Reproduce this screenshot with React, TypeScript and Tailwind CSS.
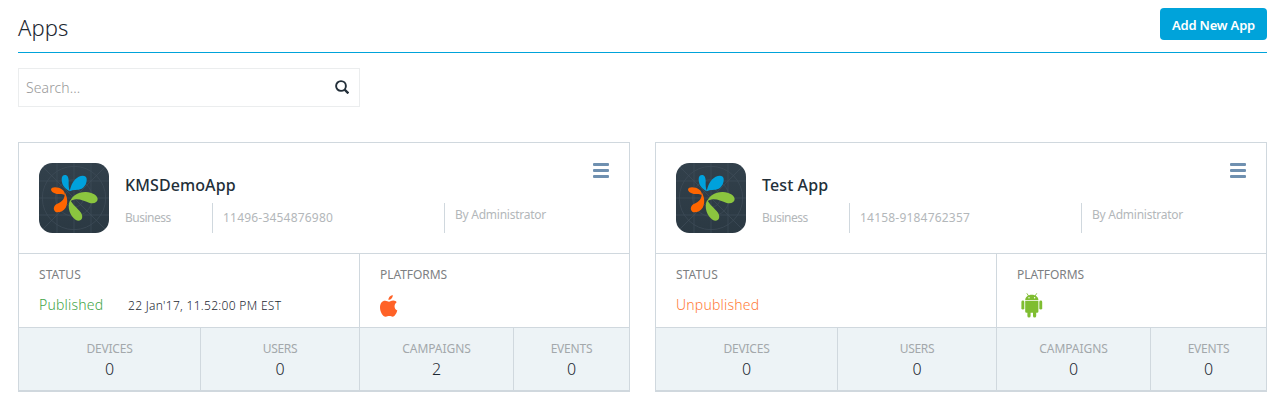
import React from 'react';

type AppInfo = {
  name: string;
  nameClass: string;
  id: string;
  published: boolean;
  date?: string;
  platform: 'apple' | 'android';
  campaigns: number;
};

const apps: AppInfo[] = [
  {
    name: 'KMSDemoApp', nameClass: 'tracking-[0.1px]', id: '11496-3454876980',
    published: true, date: "22 Jan'17, 11.52:00 PM EST", platform: 'apple', campaigns: 2,
  },
  {
    name: 'Test App', nameClass: 'tracking-[0.1px]', id: '14158-9184762357',
    published: false, platform: 'android', campaigns: 0,
  },
];

function AppLogo() {
  return (
    <svg className="h-[70px] w-[70px] shrink-0" viewBox="27 24 210 210">
      <defs>
        <linearGradient id="tile" x1="0" y1="0" x2="0" y2="1">
          <stop offset="0" stopColor="#32404b" />
          <stop offset="1" stopColor="#2b3943" />
        </linearGradient>
        <clipPath id="tileClip"><rect x="27" y="24" width="210" height="210" rx="40" /></clipPath>
      </defs>
      <rect x="27" y="24" width="210" height="210" rx="40" fill="url(#tile)" />
      <g clipPath="url(#tileClip)" fill="none" stroke="#414f5a" strokeWidth="2">
        <circle cx="132" cy="129" r="95" />
        <circle cx="132" cy="129" r="55" />
        <circle cx="132" cy="129" r="28" />
        <path d="M27 129H237M132 24V234M27 24L237 234M237 24L27 234M81 24V234M183 24V234M27 78H237M27 180H237" />
      </g>
      <path fill="#00a1dc" d="M120 109C103 102 95 88 95 73C95 64 99 60 105 60C113 60 116 68 116 78C116 89 115 98 120 109Z" />
      <path fill="#00a1dc" d="M119 109C122 91 131 73 146 65C157 60 169 61 170 71C171 84 165 95 155 101C143 107 130 102 119 109Z" />
      <path fill="#ff6500" d="M105 121C100 116 91 119 80 117C68 114 63 109 63 103C64 96 75 95 86 98C98 102 105 109 105 121Z" />
      <path fill="#ff6500" d="M104 112C113 127 114 145 107 158C99 170 84 174 76 170C69 165 70 154 79 148C97 140 106 132 104 112Z" />
      <path fill="#8bc53f" d="M121 138C128 121 146 110 168 111C187 113 203 121 203 132C203 143 191 147 177 143C159 137 142 126 121 138Z" />
      <path fill="#8bc53f" d="M121 134C126 148 143 159 153 173C160 184 157 197 145 197C127 194 107 161 121 134Z" />
    </svg>
  );
}

function SearchIcon() {
  return (
    <svg className="-mt-[2px] h-[14px] w-[14px]" viewBox="0 0 14 14" fill="none" stroke="#232f39">
      <circle cx="6" cy="6" r="4.9" strokeWidth="1.9" />
      <path d="M9.6 9.6L13.4 13.4" strokeWidth="2.3" />
    </svg>
  );
}

function AppleIcon() {
  return (
    <svg className="h-[22px] w-[18px]" viewBox="0 0 18 22" fill="#ff6227">
      <path d="M8.4 5C8.3 2.6 10 .6 12.7 0C13 2.5 11.2 4.7 8.4 5Z" />
      <path d="M9 6.7C10.2 6.7 11.4 5.6 13.2 5.6C14.9 5.6 16.3 6.4 16.6 7.3C13.7 9.4 13.9 14 17.3 15.6C16.5 18.4 14.7 21.7 12.8 21.7C11.5 21.7 10.9 21 9.3 21C7.7 21 7 21.7 5.7 21.7C2.8 21.7 0 16.7 0 12.4C0 8.3 2.2 5.7 5.1 5.7C6.8 5.7 8 6.7 9 6.7Z" />
    </svg>
  );
}

function AndroidIcon() {
  return (
    <svg className="h-[25px] w-[22px]" viewBox="0 0 22 25" fill="#7fbd31">
      <path d="M5.8 .3L7.6 3M15.8 .3L14 3" stroke="#7fbd31" strokeWidth=".9" />
      <path d="M4.2 7C4.4 4 7.1 1.8 10.8 1.8S17.2 4 17.4 7Z" />
      <circle cx="8" cy="4.7" r=".7" fill="#fff" />
      <circle cx="13.6" cy="4.7" r=".7" fill="#fff" />
      <rect x=".4" y="7.600" width="2.9" height="9" rx="1.450" />
      <rect x="18.3" y="7.600" width="2.9" height="9" rx="1.450" />
      <path d="M4.200 7.800H17.400V18.500Q17.400 19.800 16.100 19.800H15.200V23Q15.200 24.600 13.600 24.600T12 23V19.800H9.600V23Q9.600 24.600 8 24.600T6.400 23V19.800H5.500Q4.200 19.800 4.200 18.500Z" />
    </svg>
  );
}

function Stat({ label, value, className, labelClass }: { label: string; value: number; className: string; labelClass: string }) {
  return (
    <div className={'flex flex-col items-center border-[#d0d8de] pt-[11px] ' + className}>
      <span className={'text-[12px] leading-5 text-[#a3a8ab] ' + labelClass}>{label}</span>
      <span className="-mt-px text-[16px] leading-[22px] font-light text-[#1c2731]">{value}</span>
    </div>
  );
}

function Card({ app }: { app: AppInfo }) {
  return (
    <section className="flex h-[250px] w-[612px] flex-col border border-b-2 border-[#d0d8de]">
      <div className="flex h-[111px] border-b border-[#d0d8de] pl-5 pt-5">
        <AppLogo />
        <div className="ml-4 flex w-[468px] flex-col">
          <h2 className={'mt-[10px] h-[30px] text-[16px] font-medium leading-6 text-[#232f39] ' + app.nameClass}>{app.name}</h2>
          <div className="flex h-[30px] text-[12px] leading-[30px] text-[#b3b7ba]">
            <span className="w-[87px] tracking-[-0.5px]">Business</span>
            <span className="w-[232px] border-l border-[#d0d8de] pl-[10px] tracking-[0.2px]">{app.id}</span>
            <span className="border-l border-[#d0d8de] pl-[10px] leading-6 tracking-[-0.25px]">By Administrator</span>
          </div>
        </div>
        <div className="flex w-4 flex-col gap-[3px]">
          <i className="h-[3px] rounded-[1px] bg-[#6f90b0]" />
          <i className="h-[3px] rounded-[1px] bg-[#6f90b0]" />
          <i className="h-[3px] rounded-[1px] bg-[#6f90b0]" />
        </div>
      </div>
      <div className="flex h-[74px] border-b border-[#d0d8de]">
        <div className="w-[341px] border-r border-[#d0d8de] pl-5 pt-[11px]">
          <div className="text-[12px] leading-5 tracking-[0.1px] text-[#7d8082]">STATUS</div>
          <div className="mt-[7px] flex h-6 items-center">
            <span className={'text-[14px] font-light ' + (app.published ? 'w-[89px] tracking-[0.2px] text-[#43a548]' : 'tracking-[0.2px] text-[#ff7a38]')}>
              {app.published ? 'Published' : 'Unpublished'}
            </span>
            {app.date && <span className="mt-[3px] text-[12px] font-light tracking-[0.3px] text-[#1c2731]">{app.date}</span>}
          </div>
        </div>
        <div className="pl-5 pt-[11px]">
          <div className="text-[12px] leading-5 tracking-[-0.05px] text-[#7d8082]">PLATFORMS</div>
          {app.platform === 'apple'
            ? <div className="mt-[10px]"><AppleIcon /></div>
            : <div className="ml-[4px] mt-[8px]"><AndroidIcon /></div>}
        </div>
      </div>
      <div className="flex flex-1 bg-[#edf3f6]">
        <Stat label="DEVICES" value={0} className="w-[182px] border-r" labelClass="tracking-[-0.2px]" />
        <Stat label="USERS" value={0} className="w-[159px] border-r" labelClass="tracking-[-0.3px]" />
        <Stat label="CAMPAIGNS" value={app.campaigns} className="w-[154px] border-r" labelClass="tracking-[-0.05px]" />
        <Stat label="EVENTS" value={0} className="flex-1" labelClass="tracking-[-0.2px]" />
      </div>
    </section>
  );
}

export default function App() {
  return (
    <main className="h-[404px] w-[1275px] overflow-hidden bg-white pl-[18px] pr-2 pt-2 font-['Noto_Sans',sans-serif]">
      <header className="flex h-[45px] items-start justify-between border-b border-[#00a3da]">
        <h1 className="mt-1 text-[22px] font-light leading-[30px] tracking-[0.1px] text-[#1c2731]">Apps</h1>
        <button className="h-8 w-[107px] rounded-[4px] bg-[#00a3da] pt-[3px] text-[13px] font-semibold tracking-[-0.2px] text-white">Add New App</button>
      </header>
      <div className="mt-[15px] flex h-[39px] w-[342px] items-center justify-between border border-[#ebedee] pl-[7px] pr-[10px]">
        <span className="text-[14px] font-light tracking-[0.1px] text-[#999]">Search...</span>
        <SearchIcon />
      </div>
      <div className="mt-[35px] flex justify-between">
        {apps.map((app) => <Card key={app.id} app={app} />)}
      </div>
    </main>
  );
}
